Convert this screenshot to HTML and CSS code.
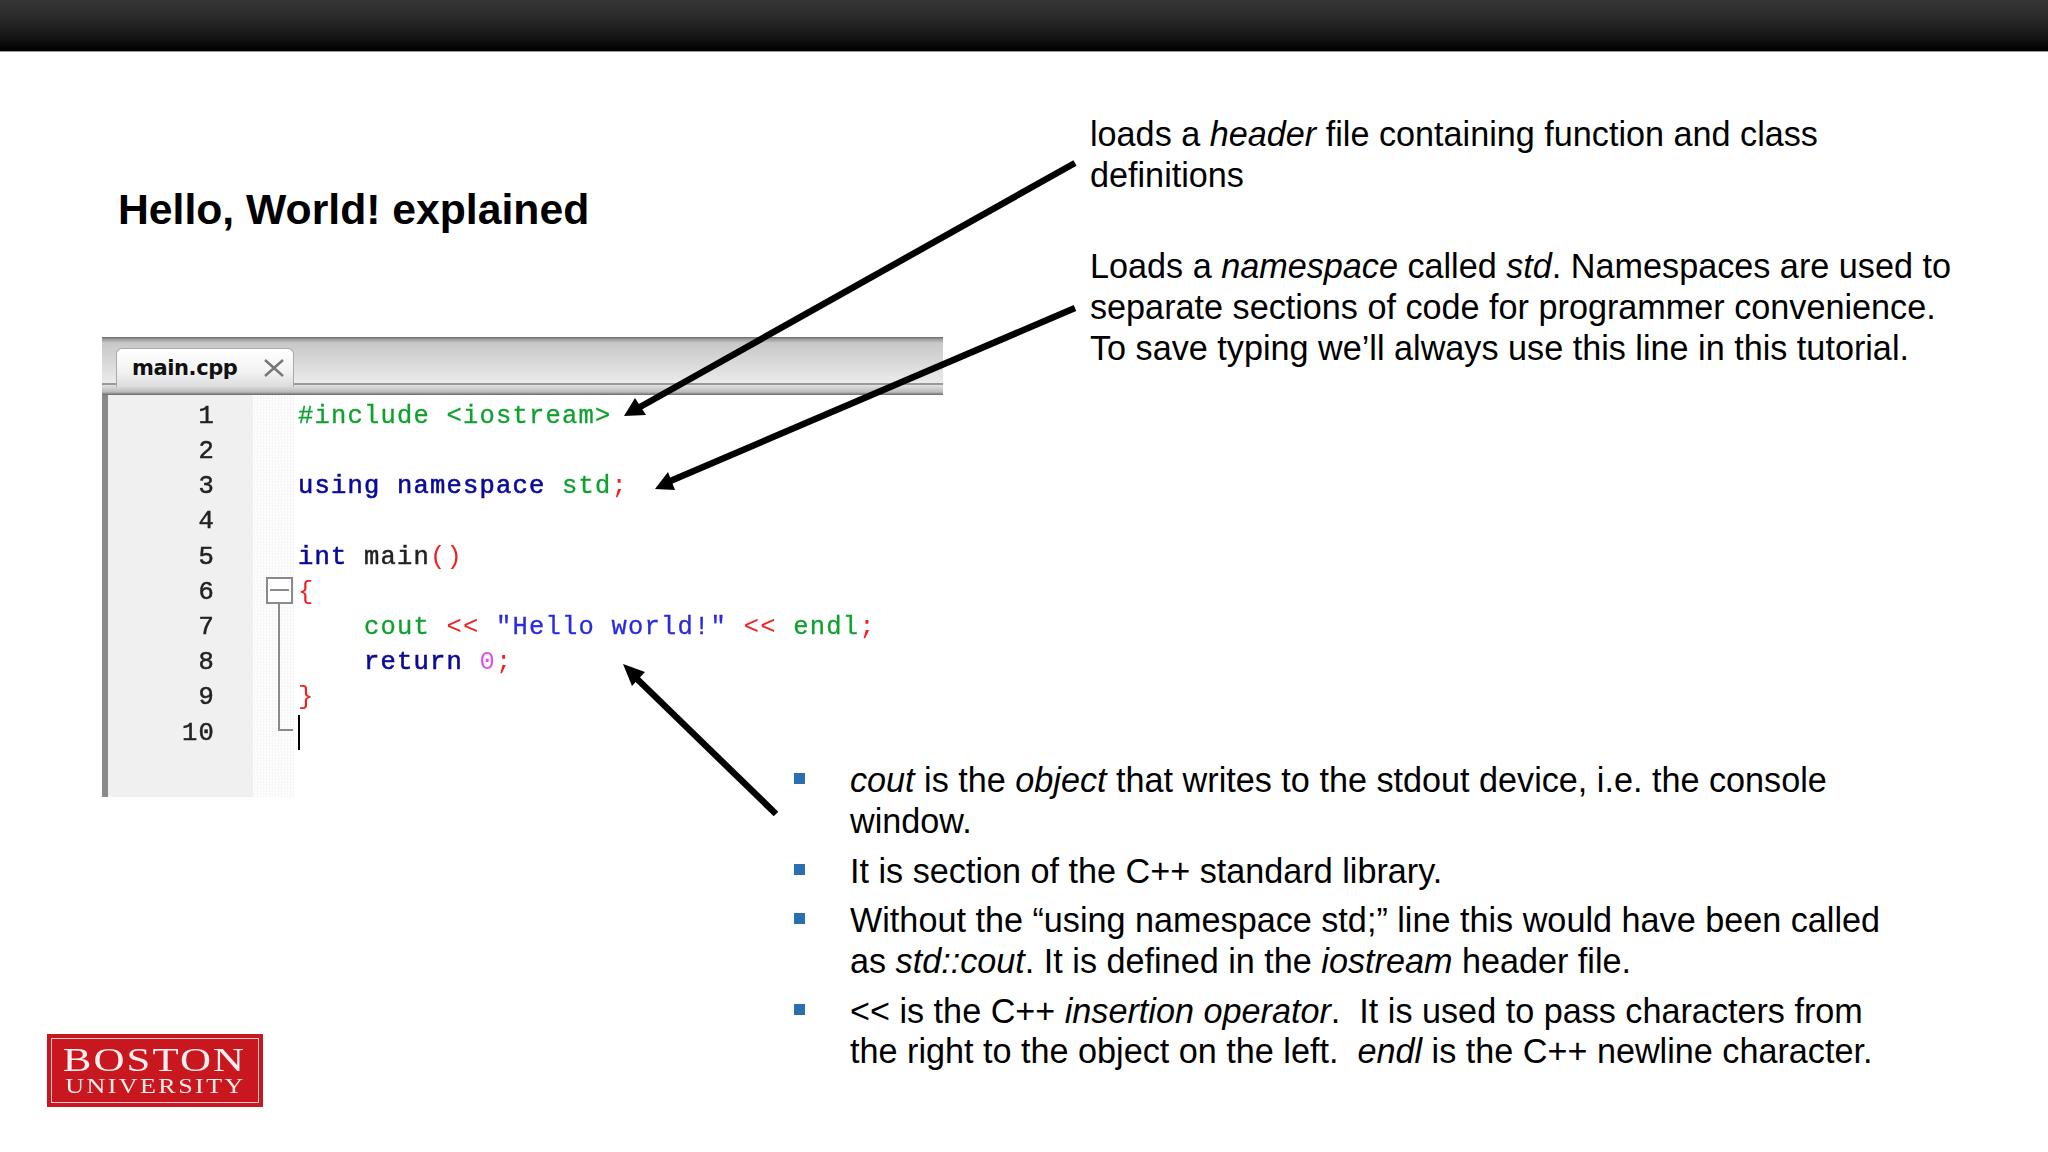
FILE: index.html
```html
<!DOCTYPE html>
<html lang="en">
<head>
<meta charset="utf-8">
<title>Hello, World! explained</title>
<link rel="stylesheet" href="styles.css">
</head>
<body>
<header class="topbar"></header>
<main class="slide">
  <section class="left">
    <h1 class="title">Hello, World! explained</h1>
    <div class="editor">
      <div class="tabbar">
        <div class="tab">
          <span class="tab-name">main.cpp</span>
          <svg class="tab-close" viewBox="0 0 20 18"><path d="M1 1 L19 17 M19 1 L1 17"/></svg>
        </div>
      </div>
      <div class="tabstrip"></div>
      <div class="editor-body">
        <div class="gutter">
          <div>1</div><div>2</div><div>3</div><div>4</div><div>5</div><div>6</div><div>7</div><div>8</div><div>9</div><div>10</div>
        </div>
        <div class="fold">
          <svg class="fold-icon" viewBox="0 0 27 156"><rect x="1" y="1" width="25" height="25"/><path d="M4 13 H23 M13 26 V153 H27"/></svg>
        </div>
        <div class="code">
          <div class="ln"><span class="g">#include &lt;iostream&gt;</span></div>
          <div class="ln"></div>
          <div class="ln"><span class="k">using namespace</span> <span class="g">std</span><span class="r">;</span></div>
          <div class="ln"></div>
          <div class="ln"><span class="k">int</span> <span class="d">main</span><span class="r">()</span></div>
          <div class="ln"><span class="r">{</span></div>
          <div class="ln in"><span class="g">cout</span> <span class="r">&lt;&lt;</span> <span class="b">"Hello world!"</span> <span class="r">&lt;&lt;</span> <span class="g">endl</span><span class="r">;</span></div>
          <div class="ln in"><span class="k">return</span> <span class="m">0</span><span class="r">;</span></div>
          <div class="ln"><span class="r">}</span></div>
          <div class="ln"><span class="caret"></span></div>
        </div>
      </div>
    </div>
    <div class="logo">
      <div class="logo-inner">
        <span class="logo-a">BOSTON</span>
        <span class="logo-b">UNIVERSITY</span>
      </div>
    </div>
  </section>
  <section class="right">
    <div class="callouts">
      <p class="note">loads a <em>header</em> file containing function and class definitions</p>
      <p class="note">Loads a <em>namespace</em> called <em>std</em>. Namespaces are used to separate sections of code for programmer convenience. To save typing we’ll always use this line in this tutorial.</p>
    </div>
    <ul class="points">
      <li><em>cout</em> is the <em>object</em> that writes to the stdout device, i.e. the console window.</li>
      <li>It is section of the C++ standard library.</li>
      <li>Without the “using namespace std;” line this would have been called as <em>std::cout</em>. It is defined in the <em>iostream</em> header file.</li>
      <li>&lt;&lt; is the C++ <em>insertion operator</em>.&nbsp; It is used to pass characters from the right to the object on the left.&nbsp; <em>endl</em> is the C++ newline character.</li>
    </ul>
  </section>
  <svg class="arrows" viewBox="0 0 2048 1152">
    <path class="shaft" d="M1075 163 L640 407"/>
    <path class="head" d="M624 416 L635 398 L646 415 Z"/>
    <path class="shaft" d="M1075 308 L668 482"/>
    <path class="head" d="M655 489 L668 472 L675 490 Z"/>
    <path class="shaft" d="M776 814 L633 675"/>
    <path class="head" d="M623 664 L645 672 L632 686 Z"/>
  </svg>
</main>
</body>
</html>
```
FILE: styles.css
```css
* { box-sizing: border-box; }
html, body { margin: 0; padding: 0; background: #fff; }
body { width: 2048px; height: 1152px; overflow: hidden; font-family: "Liberation Sans", Arial, sans-serif; color: #000; }

.topbar { height: 52px; background: linear-gradient(#363636, #2c2c2c 30%, #141414 75%, #000 98%); border-bottom: 1px solid #9a9a9a; }

.slide { display: grid; grid-template-columns: 795px 148px 1fr; height: 1100px; }

.left { grid-column: 1 / 3; grid-row: 1; padding-left: 102px; }
.title { margin: 132px 0 0 16px; font-size: 42.7px; line-height: 50px; font-weight: 700; }

.editor { margin-top: 103px; width: 841px; }
.tabbar { height: 48px; padding: 11px 0 0 14px; background: linear-gradient(#666 0, #999 2px, #c8c8c8 6px, #ebebeb 100%); border-bottom: 2px solid #999; display: flex; }
.tab { width: 178px; height: 39px; padding: 0 9px 0 15px; display: flex; align-items: center; justify-content: space-between; background: linear-gradient(#fff, #f2f2f2 60%, #dcdcdc); border: 1px solid #aaa; border-bottom: 0; border-radius: 6px 6px 0 0; position: relative; z-index: 1; }
.tab-name { font-family: "DejaVu Sans", sans-serif; font-weight: 700; font-size: 21px; letter-spacing: -0.4px; color: #111; }
.tab-close { width: 20px; height: 18px; }
.tab-close path { fill: none; stroke: #777; stroke-width: 2.4; }
.tabstrip { height: 10px; background: linear-gradient(#e2e2e2, #bbb 70%, #666 100%); }

.editor-body { display: flex; height: 402px; border-left: 6px solid #8a8a8a; }
.gutter { width: 145px; padding: 3.8px 38px 0 0; background: #f0f0f0; text-align: right; font-family: "Liberation Mono", monospace; font-size: 25.5px; letter-spacing: 1.2px; line-height: 35.2px; color: #222; -webkit-text-stroke: 0.5px #222; filter: blur(0.4px); }
.fold { width: 41px; padding: 182px 0 0 13px; background: repeating-conic-gradient(#f6f6f6 0 25%, #fff 0 50%) 0 0 / 3px 3px; }
.fold-icon { display: block; width: 27px; height: 156px; }
.fold-icon rect { fill: #fff; stroke: #8a8a8a; stroke-width: 2; }
.fold-icon path { fill: none; stroke: #8a8a8a; stroke-width: 2; }
.code { flex: 1; padding: 3.8px 0 0 4px; font-family: "Liberation Mono", monospace; font-size: 25.5px; letter-spacing: 1.2px; filter: blur(0.4px); }
.ln { height: 35.2px; line-height: 35.2px; white-space: pre; }
.in { padding-left: 66px; }
.caret { display: block; width: 2px; height: 35px; background: #000; }
.g { color: #10a030; -webkit-text-stroke: 0.3px #10a030; }
.k { color: #0a0a9a; -webkit-text-stroke: 0.6px #0a0a9a; }
.d { color: #222; -webkit-text-stroke: 0.5px #222; }
.r { color: #f02020; }
.b { color: #2a2ae0; -webkit-text-stroke: 0.3px #2a2ae0; }
.m { color: #e050e8; }

.logo { margin: 237px 0 0 -55px; width: 216px; height: 73px; background: #c8171e; padding: 4px; }
.logo-inner { height: 100%; border: 1px solid #f4c8c8; display: flex; flex-direction: column; align-items: center; justify-content: center; color: #fbeeee; font-family: "Liberation Serif", serif; filter: blur(0.3px); }
.logo-a { font-size: 33px; line-height: 29px; letter-spacing: 1.6px; transform: scaleX(1.3); margin-top: 1px; }
.logo-b { font-size: 20px; line-height: 22px; letter-spacing: 1.9px; transform: scaleX(1.3); }

.right { grid-column: 2 / 4; grid-row: 1; font-size: 34.2px; line-height: 40.7px; }
.callouts { padding: 62px 88px 0 295px; display: flex; flex-direction: column; gap: 51px; }
.note { margin: 0; }
.points { list-style: none; margin: 391.7px 0 0; padding: 0 158px 0 55px; display: flex; flex-direction: column; gap: 9px; }
.points li { position: relative; }
.points li::before { content: ""; position: absolute; left: -56px; top: 13px; width: 11px; height: 11px; background: #2b6fb0; }

.arrows { position: absolute; left: 0; top: 0; width: 2048px; height: 1152px; pointer-events: none; }
.shaft { fill: none; stroke: #000; stroke-width: 6.5; }
.head { fill: #000; }
```
